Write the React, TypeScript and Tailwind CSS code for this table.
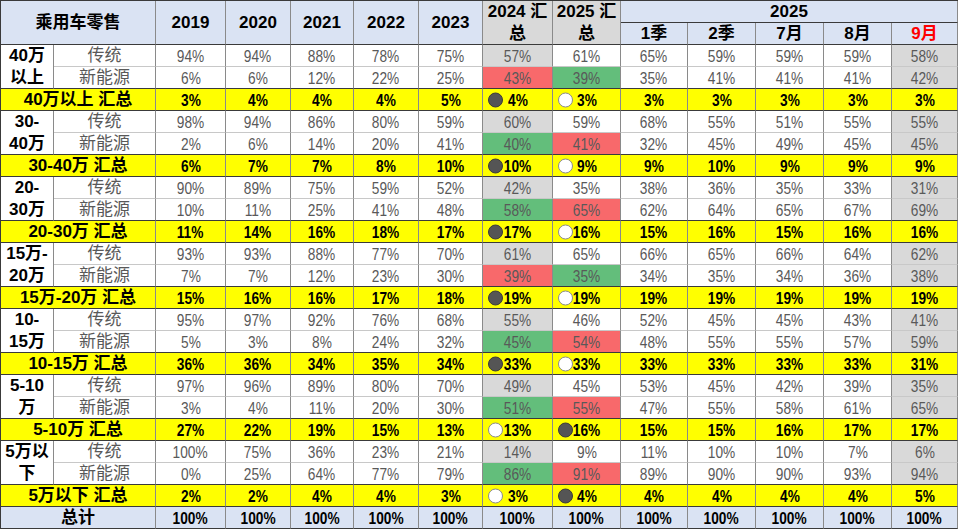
import React from "react";

type Group = {
  cat: [string, string];
  sum: string;
  trad: number[];
  nev: number[];
  total: number[];
  nev24: "g" | "r";
  nev25: "g" | "r";
  dot24: "d" | "w";
  dot25: "d" | "w";
};

const groups: Group[] = [
  {
    cat: ["40万", "以上"],
    sum: "40万以上 汇总",
    trad: [94, 94, 88, 78, 75, 57, 61, 65, 59, 59, 59, 58],
    nev: [6, 6, 12, 22, 25, 43, 39, 35, 41, 41, 41, 42],
    total: [3, 4, 4, 4, 5, 4, 3, 3, 3, 3, 3, 3],
    nev24: "r",
    nev25: "g",
    dot24: "d",
    dot25: "w",
  },
  {
    cat: ["30-", "40万"],
    sum: "30-40万 汇总",
    trad: [98, 94, 86, 80, 59, 60, 59, 68, 55, 51, 55, 55],
    nev: [2, 6, 14, 20, 41, 40, 41, 32, 45, 49, 45, 45],
    total: [6, 7, 7, 8, 10, 10, 9, 9, 10, 9, 9, 9],
    nev24: "g",
    nev25: "r",
    dot24: "d",
    dot25: "w",
  },
  {
    cat: ["20-", "30万"],
    sum: "20-30万 汇总",
    trad: [90, 89, 75, 59, 52, 42, 35, 38, 36, 35, 33, 31],
    nev: [10, 11, 25, 41, 48, 58, 65, 62, 64, 65, 67, 69],
    total: [11, 14, 16, 18, 17, 17, 16, 15, 16, 15, 16, 16],
    nev24: "g",
    nev25: "r",
    dot24: "d",
    dot25: "w",
  },
  {
    cat: ["15万-", "20万"],
    sum: "15万-20万 汇总",
    trad: [93, 93, 88, 77, 70, 61, 65, 66, 65, 66, 64, 62],
    nev: [7, 7, 12, 23, 30, 39, 35, 34, 35, 34, 36, 38],
    total: [15, 16, 16, 17, 18, 19, 19, 19, 19, 19, 19, 19],
    nev24: "r",
    nev25: "g",
    dot24: "d",
    dot25: "w",
  },
  {
    cat: ["10-", "15万"],
    sum: "10-15万 汇总",
    trad: [95, 97, 92, 76, 68, 55, 46, 52, 45, 45, 43, 41],
    nev: [5, 3, 8, 24, 32, 45, 54, 48, 55, 55, 57, 59],
    total: [36, 36, 34, 35, 34, 33, 33, 33, 33, 33, 33, 31],
    nev24: "g",
    nev25: "r",
    dot24: "d",
    dot25: "w",
  },
  {
    cat: ["5-10", "万"],
    sum: "5-10万 汇总",
    trad: [97, 96, 89, 80, 70, 49, 45, 53, 45, 42, 39, 35],
    nev: [3, 4, 11, 20, 30, 51, 55, 47, 55, 58, 61, 65],
    total: [27, 22, 19, 15, 13, 13, 16, 15, 15, 16, 17, 17],
    nev24: "g",
    nev25: "r",
    dot24: "w",
    dot25: "d",
  },
  {
    cat: ["5万以", "下"],
    sum: "5万以下 汇总",
    trad: [100, 75, 36, 23, 21, 14, 9, 11, 10, 10, 7, 6],
    nev: [0, 25, 64, 77, 79, 86, 91, 89, 90, 90, 93, 94],
    total: [2, 2, 4, 4, 3, 3, 4, 4, 4, 4, 4, 5],
    nev24: "g",
    nev25: "r",
    dot24: "w",
    dot25: "d",
  },
];

const FONT = { fontFamily: '"Liberation Sans", "Noto Sans CJK SC", sans-serif' };

const base =
  "flex items-center justify-center border-r border-b border-r-[#8a8a8a] leading-[20px]";

function Num({ children }: { children: React.ReactNode }) {
  return <span className="inline-block text-[16.5px] leading-[20px] scale-x-[0.83]">{children}</span>;
}

function Dot({ kind }: { kind: "d" | "w" }) {
  return kind === "d" ? (
    <span className="absolute left-[5px] top-1/2 -translate-y-1/2 w-[15px] h-[15px] rounded-full bg-[#555555] border border-[#3a3a3a]" />
  ) : (
    <span className="absolute left-[5px] top-1/2 -translate-y-1/2 w-[15px] h-[15px] rounded-full bg-white border border-[#8a8a8a]" />
  );
}

function dataBg(col: number, kind: "trad" | "nev", g: Group) {
  if (col === 5) {
    if (kind === "trad") return "bg-[#d9d9d9]";
    return g.nev24 === "g" ? "bg-[#63be7b]" : "bg-[#f8696b]";
  }
  if (col === 6) {
    if (kind === "trad") return "bg-white";
    return g.nev25 === "g" ? "bg-[#63be7b]" : "bg-[#f8696b]";
  }
  if (col === 11) return "bg-[#d9d9d9]";
  return "bg-white";
}

export default function App() {
  const cells: React.ReactNode[] = [];
  const hb = "border-b-[#3a3a3a]";
  const lb = "border-b-[#c8c8c8]";

  cells.push(
    <div key="h0" className={`${base} ${hb} col-span-2 row-span-2 bg-[#dae3f3] text-[17px] font-bold text-black`}>
      乘用车零售
    </div>
  );
  ["2019", "2020", "2021", "2022", "2023"].forEach((y) =>
    cells.push(
      <div key={"h" + y} className={`${base} ${hb} row-span-2 bg-[#dae3f3] text-[17px] font-bold text-black`}>
        {y}
      </div>
    )
  );
  ["2024", "2025"].forEach((y) =>
    cells.push(
      <div key={"hs" + y} className={`${base} ${hb} row-span-2 bg-[#d9d9d9] text-[17px] font-bold text-black text-center leading-[22px] flex-col`}>
        <span>{y} 汇</span>
        <span>总</span>
      </div>
    )
  );
  cells.push(
    <div key="h2025" className={`${base} ${hb} col-span-5 bg-[#dae3f3] text-[17px] font-bold text-black`}>
      2025
    </div>
  );
  ["1季", "2季", "7月", "8月", "9月"].forEach((m) =>
    cells.push(
      <div
        key={"hm" + m}
        className={`${base} ${hb} bg-[#dae3f3] text-[17px] font-bold ${m === "9月" ? "text-[#ff0000]" : "text-black"}`}
      >
        {m}
      </div>
    )
  );

  groups.forEach((g, gi) => {
    cells.push(
      <div
        key={"cat" + gi}
        className={`${base} ${hb} row-span-2 flex-col bg-white text-[17px] font-bold text-black leading-[22px]`}
      >
        <span>{g.cat[0]}</span>
        <span>{g.cat[1]}</span>
      </div>
    );
    cells.push(
      <div key={"tl" + gi} className={`${base} ${lb} bg-white text-[17px] text-[#595959]`}>
        传统
      </div>
    );
    g.trad.forEach((v, ci) =>
      cells.push(
        <div key={"t" + gi + "-" + ci} className={`${base} ${lb} ${dataBg(ci, "trad", g)} text-[#595959]`}>
          <Num>{v}%</Num>
        </div>
      )
    );
    cells.push(
      <div key={"nl" + gi} className={`${base} ${hb} bg-white text-[17px] text-[#595959]`}>
        新能源
      </div>
    );
    g.nev.forEach((v, ci) =>
      cells.push(
        <div key={"n" + gi + "-" + ci} className={`${base} ${hb} ${dataBg(ci, "nev", g)} text-[#595959]`}>
          <Num>{v}%</Num>
        </div>
      )
    );
    cells.push(
      <div key={"sl" + gi} className={`${base} ${hb} col-span-2 bg-[#ffff00] text-[17px] font-bold text-black`}>
        {g.sum}
      </div>
    );
    g.total.forEach((v, ci) =>
      cells.push(
        <div key={"s" + gi + "-" + ci} className={`${base} ${hb} relative bg-[#ffff00] font-bold text-black`}>
          {ci === 5 && <Dot kind={g.dot24} />}
          {ci === 6 && <Dot kind={g.dot25} />}
          <Num>{v}%</Num>
        </div>
      )
    );
  });

  cells.push(
    <div key="tot" className={`${base} ${hb} col-span-2 bg-[#dae3f3] text-[17px] font-bold text-black`}>
      总计
    </div>
  );
  for (let i = 0; i < 12; i++) {
    cells.push(
      <div key={"tv" + i} className={`${base} ${hb} bg-[#dae3f3] font-bold text-black`}>
        <Num>100%</Num>
      </div>
    );
  }

  return (
    <div className="w-[960px] h-[530px] bg-white overflow-hidden" style={FONT}>
      <div className="inline-grid grid-cols-[53px_102px_70px_65px_63px_65px_64px_70px_68px_67px_68px_68px_68px_66px] auto-rows-[22px] border-l border-t border-l-[#3a3a3a] border-t-[#3a3a3a]">
        {cells}
      </div>
    </div>
  );
}
